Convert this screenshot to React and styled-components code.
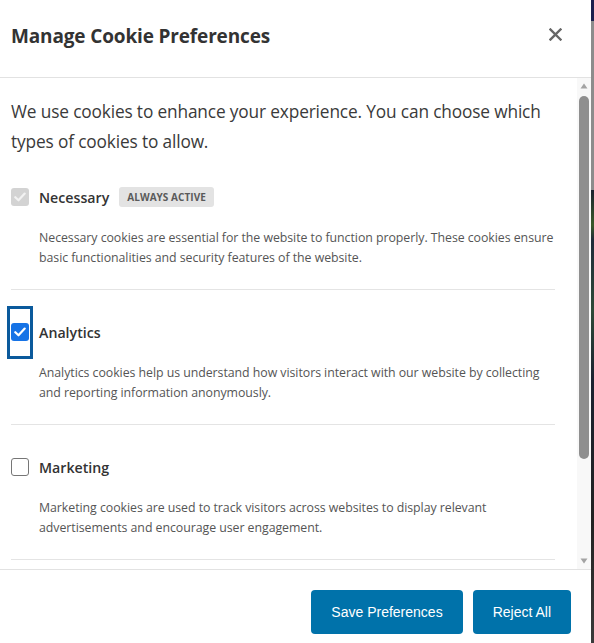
import React from "react";
import styled, { createGlobalStyle, css } from "styled-components";

const GlobalStyle = createGlobalStyle`
  html, body { margin: 0; padding: 0; }
  body { background: #1d2433; font-family: "Open Sans", "Noto Sans", sans-serif; }
  * { box-sizing: border-box; }
`;

const Page = styled.div`
  display: flex;
  width: 594px;
  height: 643px;
  overflow: hidden;
  background: linear-gradient(
    to bottom,
    #1b1f4d 0px,
    #1b1f4d 21px,
    #8c8c8c 21px,
    #8c8c8c 190px,
    #1a2230 190px,
    #3a5a2a 225px,
    #1f2b3a 240px,
    #2e4a38 310px,
    #1a2230 380px,
    #222 520px,
    #3a3a3a 643px
  );
`;

const Modal = styled.div`
  width: 591px;
  height: 643px;
  background: #ffffff;
  display: flex;
  flex-direction: column;
  overflow: hidden;
`;

const Header = styled.header`
  flex: none;
  height: 78px;
  display: flex;
  align-items: center;
  justify-content: space-between;
  padding: 0 29px 6px 11px;
  border-bottom: 1px solid #e2e2e2;
`;

const Title = styled.h2`
  margin: 0;
  font-family: "Open Sans", "Noto Sans", sans-serif;
  font-size: 19px;
  font-weight: 700;
  color: #333333;
  letter-spacing: -0.15px;
`;

const CloseButton = styled.button`
  width: 14px;
  height: 14px;
  padding: 0;
  border: 0;
  background: none;
  display: flex;
  align-items: center;
  justify-content: center;
  cursor: pointer;
  margin-top: -2px;
`;

const BodyArea = styled.div`
  flex: none;
  height: 491px;
  display: flex;
`;

const Content = styled.div`
  flex: 1;
  min-width: 0;
  overflow: hidden;
  padding: 0 22px 6px 11px;
`;

const ScrollBar = styled.div`
  flex: none;
  width: 14px;
  display: flex;
  flex-direction: column;
  background: #f8f8f8;
`;

const ScrollButton = styled.div`
  flex: none;
  height: 16px;
  display: flex;
  align-items: center;
  justify-content: center;
`;

const Track = styled.div`
  flex: 1;
  padding: 2px;
`;

const Thumb = styled.div`
  height: 363px;
  border-radius: 5px;
  background: #8f8f8f;
`;

const Intro = styled.p`
  margin: 0;
  padding-top: 19px;
  font-size: 17.3px;
  line-height: 30px;
  color: #3a3a3a;
  letter-spacing: -0.15px;
`;

const Section = styled.section`
  padding: ${(p) => (p.$first ? "28px" : "30px")} 0 21px;
  border-bottom: 1px solid #e4e4e4;
`;

const Row = styled.div`
  display: flex;
  align-items: center;
  height: 24px;
`;

const Label = styled.span`
  margin-left: 10px;
  font-size: 14.2px;
  font-weight: 600;
  color: #333333;
`;

const Badge = styled.span`
  margin-left: 10px;
  height: 20px;
  padding: 0 8px;
  display: inline-flex;
  align-items: center;
  border-radius: 3px;
  background: #e3e3e3;
  color: #5a5a5a;
  font-size: 10px;
  font-weight: 700;
  letter-spacing: 0.05px;
  text-transform: uppercase;
`;

const Desc = styled.p`
  margin: 19px 0 0;
  padding-left: 28px;
  font-size: 12.35px;
  line-height: 20px;
  color: #555555;
  letter-spacing: -0.05px;
`;

const Box = styled.span`
  position: relative;
  flex: none;
  width: 18px;
  height: 18px;
  border-radius: 3px;
  display: flex;
  align-items: center;
  justify-content: center;
  ${(p) =>
    p.$state === "disabled" &&
    css`
      background: #d3d3d3;
    `}
  ${(p) =>
    p.$state === "checked" &&
    css`
      background: #1673e6;
    `}
  ${(p) =>
    p.$state === "unchecked" &&
    css`
      background: #fff;
      border: 1px solid #767676;
    `}
  ${(p) =>
    p.$focused &&
    css`
      &::after {
        content: "";
        position: absolute;
        top: -17px;
        bottom: -18px;
        left: -4px;
        right: -4px;
        border: 3px solid #0b5a9c;
      }
    `}
`;

const Footer = styled.footer`
  flex: none;
  display: flex;
  justify-content: flex-end;
  gap: 10px;
  padding: 20px 20px 20px;
  border-top: 1px solid #e2e2e2;
`;

const Button = styled.button`
  height: 44px;
  padding: 0 20px;
  border: 0;
  border-radius: 4px;
  background: #0072aa;
  color: #ffffff;
  font-family: "Liberation Sans", Arial, sans-serif;
  font-size: 14px;
  cursor: pointer;
`;

function Checkbox({ state, focused }) {
  return (
    <Box $state={state} $focused={focused}>
      {state !== "unchecked" && (
        <svg width="12" height="10" viewBox="0 0 12 10">
          <path
            d="M1.3 5.2 L4.5 8.3 L10.7 1.6"
            fill="none"
            stroke={state === "disabled" ? "#f2f2f2" : "#ffffff"}
            strokeWidth="2.2"
            strokeLinecap="round"
            strokeLinejoin="round"
          />
        </svg>
      )}
    </Box>
  );
}

const sections = [
  {
    name: "Necessary",
    state: "disabled",
    badge: "Always Active",
    desc: "Necessary cookies are essential for the website to function properly. These cookies ensure basic functionalities and security features of the website.",
  },
  {
    name: "Analytics",
    state: "checked",
    focused: true,
    desc: "Analytics cookies help us understand how visitors interact with our website by collecting and reporting information anonymously.",
  },
  {
    name: "Marketing",
    state: "unchecked",
    desc: "Marketing cookies are used to track visitors across websites to display relevant advertisements and encourage user engagement.",
  },
  {
    name: "Preferences",
    state: "unchecked",
    desc: "Preference cookies enable the website to remember information that changes how it behaves or looks, like your preferred language.",
  },
];

export default function App() {
  return (
    <>
      <GlobalStyle />
      <Page>
        <Modal>
          <Header>
            <Title>Manage Cookie Preferences</Title>
            <CloseButton aria-label="Close">
              <svg width="13" height="13" viewBox="0 0 13 13">
                <path
                  d="M1.5 1.5 L11.5 11.5 M11.5 1.5 L1.5 11.5"
                  stroke="#666666"
                  strokeWidth="2.4"
                  strokeLinecap="square"
                />
              </svg>
            </CloseButton>
          </Header>
          <BodyArea>
            <Content>
              <Intro>
                We use cookies to enhance your experience. You can choose which
                types of cookies to allow.
              </Intro>
              {sections.map((s, i) => (
                <Section key={s.name} $first={i === 0}>
                  <Row>
                    <Checkbox state={s.state} focused={s.focused} />
                    <Label>{s.name}</Label>
                    {s.badge && <Badge>{s.badge}</Badge>}
                  </Row>
                  <Desc>{s.desc}</Desc>
                </Section>
              ))}
            </Content>
            <ScrollBar>
              <ScrollButton>
                <svg width="8" height="6" viewBox="0 0 8 6">
                  <path d="M0.5 5.5 L4 0.5 L7.5 5.5 Z" fill="#a3a3a3" />
                </svg>
              </ScrollButton>
              <Track>
                <Thumb />
              </Track>
              <ScrollButton>
                <svg width="8" height="6" viewBox="0 0 8 6">
                  <path d="M0.5 0.5 L4 5.5 L7.5 0.5 Z" fill="#a3a3a3" />
                </svg>
              </ScrollButton>
            </ScrollBar>
          </BodyArea>
          <Footer>
            <Button>Save Preferences</Button>
            <Button>Reject All</Button>
          </Footer>
        </Modal>
      </Page>
    </>
  );
}
